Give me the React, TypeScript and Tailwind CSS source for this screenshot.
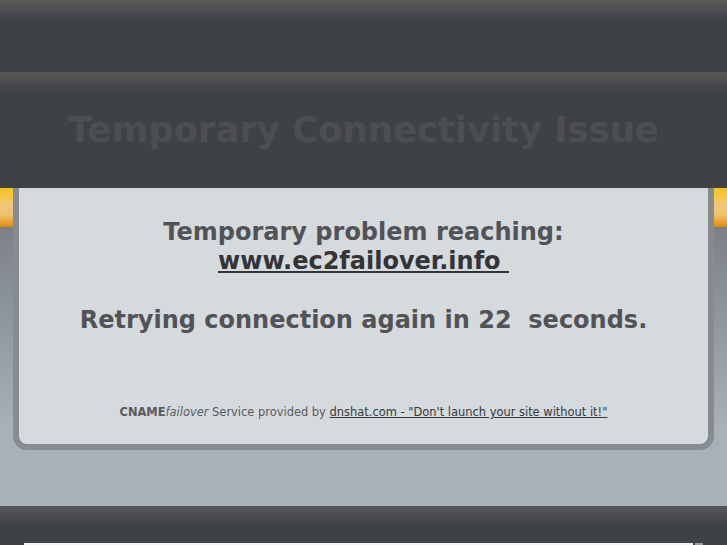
export default function App() {
  return (
    <div className="flex min-h-[545px] w-full flex-col font-['DejaVu_Sans',sans-serif]">
      {/* top bar */}
      <div className="h-[72px] bg-[linear-gradient(to_bottom,#58595b,#3f4245_20px)]" />

      {/* title band */}
      <div className="flex h-[116px] items-center justify-center bg-[linear-gradient(to_bottom,#57585a,#3f4245_20px)]">
        <h1 className="text-[35.4px] font-bold text-[#4c4e51]">Temporary Connectivity Issue</h1>
      </div>

      {/* main area */}
      <div className="flex h-[318px] bg-[linear-gradient(to_bottom,#7b8187_40px,#a8b0b8_240px)]">
        <div className="w-[13px]">
          <div className="h-[39px] bg-[linear-gradient(to_bottom,#f8c41a,#f1c67a_45%,#eec16a_70%,#de8a04)]" />
        </div>

        <div className="flex h-[262px] flex-1 flex-col rounded-b-[14px] border-x-[6px] border-b-[6px] border-[#878c90] bg-[#d5dadd] pt-[30px] text-center">
          <div className="text-[24px] leading-[29.3px] font-bold text-[#525356]">
            <p>Temporary problem reaching:</p>
            <p>
              <a className="text-[#333436] underline">www.ec2failover.info&nbsp;</a>
            </p>
            <p>&nbsp;</p>
            <p>Retrying connection again in 22&nbsp; seconds.</p>
          </div>
          <p className="mt-[69px] text-[11.45px] text-[#5a5b5e]">
            <span className="font-bold">CNAME</span>
            <i>failover</i> Service provided by{" "}
            <a className="text-[#38393b] underline">dnshat.com - "Don't launch your site without it!"</a>
          </p>
        </div>

        <div className="w-[13px]">
          <div className="h-[39px] bg-[linear-gradient(to_bottom,#f8c41a,#f1c67a_45%,#eec16a_70%,#de8a04)]" />
        </div>
      </div>

      {/* footer */}
      <div className="flex h-[39px] items-end bg-[linear-gradient(to_bottom,#555658,#3f4245_20px)] pl-[24px]">
        <div className="h-[2px] w-[669px] bg-[#f2f2f2]" />
        <div className="ml-[2px] h-[2px] w-[8px] bg-[#9a9c9e]" />
      </div>
    </div>
  );
}
